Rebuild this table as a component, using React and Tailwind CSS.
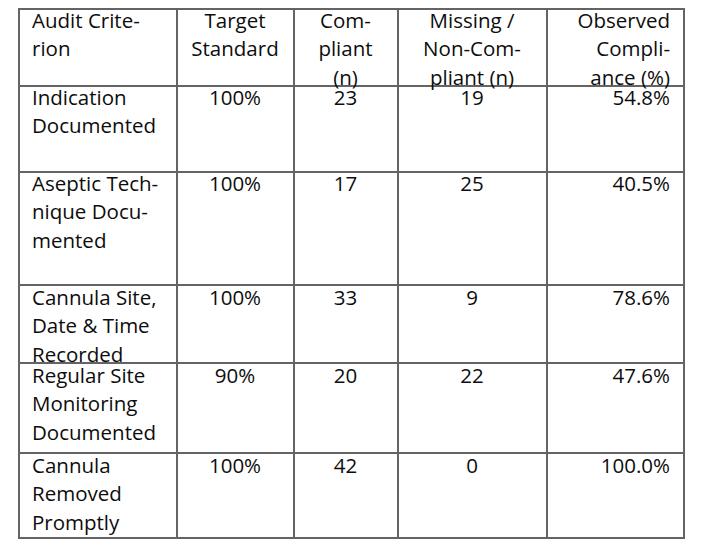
import React from "react";

// Column widths include each cell's 2px right border
const COLS = "grid-cols-[158px_117px_104px_149px_137px]";

const HEADER = [
  ["Audit Crite-", "rion"],
  ["Target", "Standard"],
  ["Com-", "pliant", "(n)"],
  ["Missing /", "Non-Com-", "pliant (n)"],
  ["Observed", "Compli-", "ance (%)"],
];

const ROWS = [
  {
    h: "h-[86px]",
    off: "-mt-[4px]",
    cells: [["Indication", "Documented"], "100%", "23", "19", "54.8%"],
  },
  {
    h: "h-[113px]",
    off: "-mt-[4px]",
    cells: [["Aseptic Tech-", "nique Docu-", "mented"], "100%", "17", "25", "40.5%"],
  },
  {
    h: "h-[78px]",
    off: "-mt-[3px]",
    cells: [["Cannula Site,", "Date & Time", "Recorded"], "100%", "33", "9", "78.6%"],
  },
  {
    h: "h-[90px]",
    off: "-mt-[3px]",
    cells: [["Regular Site", "Monitoring", "Documented"], "90%", "20", "22", "47.6%"],
  },
  {
    h: "h-[85px]",
    off: "-mt-[3px]",
    cells: [["Cannula", "Removed", "Promptly"], "100%", "42", "0", "100.0%"],
  },
];

const ALIGN = ["text-left", "text-center", "text-center", "text-center", "text-right"];

function Cell({ lines, col, h, off }) {
  const list = Array.isArray(lines) ? lines : [lines];
  return (
    <div className={`${h} border-r-2 border-b-2 border-[#646464] pl-3 pr-[13px]`}>
      <div className={`${off} ${ALIGN[col]} whitespace-nowrap`}>
        {list.map((l, i) => (
          <div key={i}>{l}</div>
        ))}
      </div>
    </div>
  );
}

export default function App() {
  return (
    <div className="min-h-screen bg-white pt-2 pl-[18px] font-['Open_Sans',sans-serif] text-[20.5px] leading-[28.3px] text-[#0d0d0d]">
      <div className={`grid ${COLS} w-[667px] border-l-2 border-t-2 border-[#646464]`}>
        {HEADER.map((lines, c) => (
          <Cell key={`h${c}`} lines={lines} col={c} h="h-[77px]" off="-mt-[4px]" />
        ))}
        {ROWS.map((row, r) =>
          row.cells.map((lines, c) => (
            <Cell key={`${r}-${c}`} lines={lines} col={c} h={row.h} off={row.off} />
          ))
        )}
      </div>
    </div>
  );
}
